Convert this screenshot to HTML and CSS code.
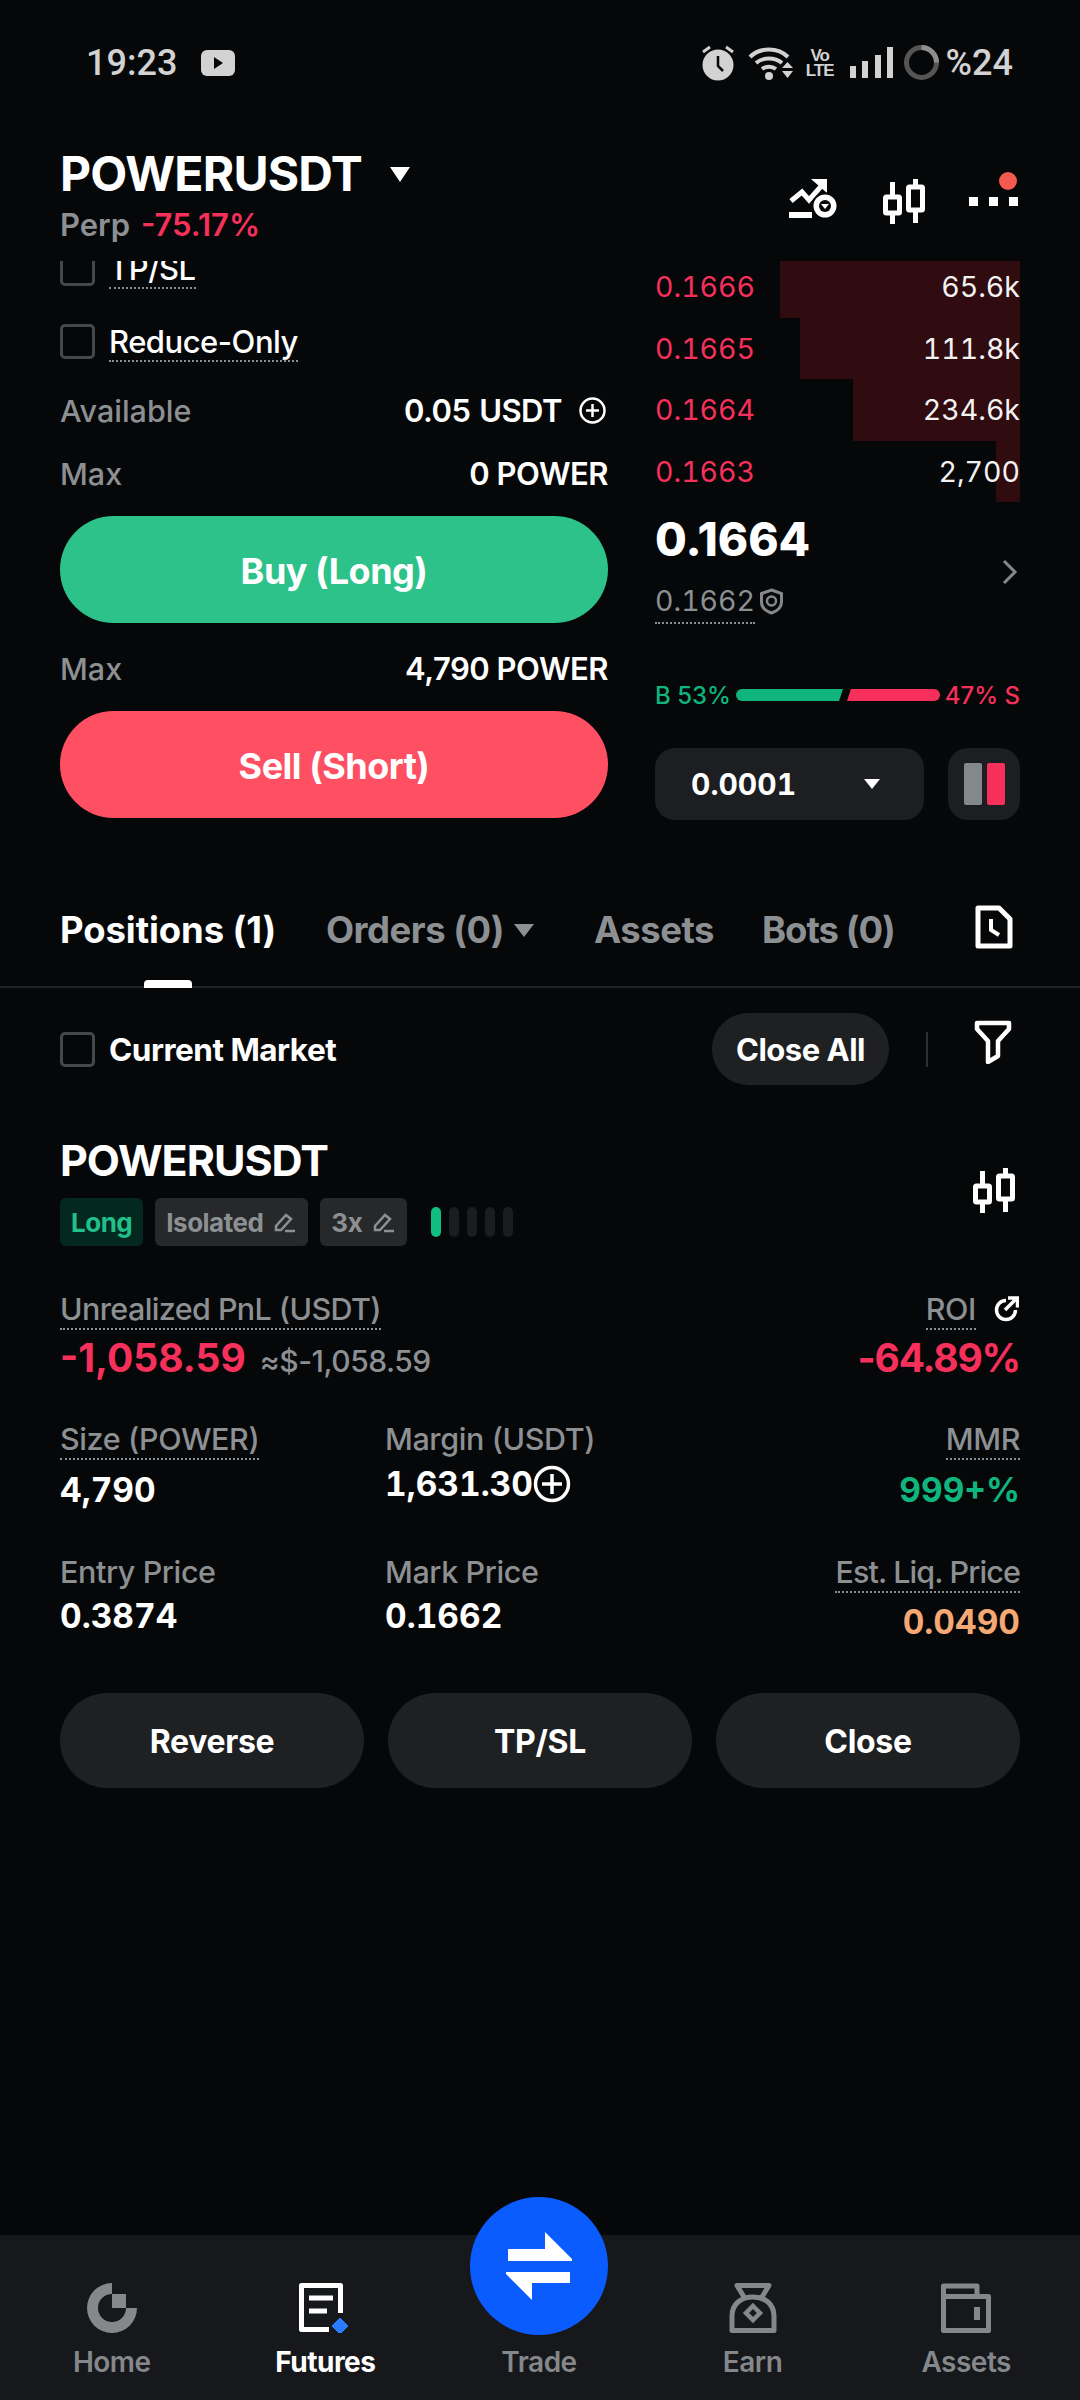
FILE: index.html
```html
<!DOCTYPE html>
<html lang="en">
<head>
    <meta charset="UTF-8">
    <meta name="viewport" content="width=device-width, initial-scale=1.0">
    <link rel="stylesheet" href="styles.css">
    <title>POWERUSDT Futures</title>
</head>
<body>
    <!-- status bar -->
    <div class="status">
        <span class="status-time">19:23</span>
        <svg class="status-yt" width="34" height="26" viewBox="0 0 34 26"><rect width="34" height="26" rx="6" fill="#d2d2d2"/><path d="M13 7l9 6-9 6z" fill="#060708"/></svg>
        <div class="status-right">
            <svg class="status-alarm" width="32" height="36" viewBox="0 0 32 36"><circle cx="16" cy="20" r="15.500" fill="#d2d2d2"/><path d="M16 11v10l5 5" fill="none" stroke="#060708" stroke-width="2.500"/><path d="M1 7l7-5M31 7l-7-5" stroke="#d2d2d2" stroke-width="3"/></svg>
            <svg class="status-wifi" width="46" height="34" viewBox="0 0 46 34"><path d="M2 11C12 1 30 1 40 11M8 17c7-6 19-6 26 0M14 23c4-3 10-3 14 0" fill="none" stroke="#d2d2d2" stroke-width="4"/><circle cx="21" cy="30" r="4" fill="#d2d2d2"/><path d="M34 22h11l-5.500-6zM34 25h11l-5.500 7z" fill="#d2d2d2"/></svg>
            <div class="volte"><span>Vo</span><span>LTE</span></div>
            <svg width="43" height="31" viewBox="0 0 43 31"><path d="M0 19h6v12H0zM12 14h6v17h-6zM25 8h6v23h-6zM37 0h6v31h-6z" fill="#d2d2d2"/></svg>
            <svg class="status-ring" width="35" height="35" viewBox="0 0 35 35"><circle cx="17.500" cy="17.500" r="15" fill="none" stroke="#555" stroke-width="5"/><path d="M17.500 2.500a15 15 0 0 1 15 15" fill="none" stroke="#8e8e8e" stroke-width="5"/></svg>
            <span class="status-batt">%24</span>
        </div>
    </div>

    <!-- pair header -->
    <div class="header">
        <div>
            <div class="pair">POWERUSDT <span class="pair-arrow"></span></div>
            <div class="pair-sub"><span class="muted">Perp</span> <span class="red">-75.17%</span></div>
        </div>
        <div class="header-icons">
            <svg width="48" height="40" viewBox="0 0 48 40"><path d="M0 33h23v6H0z" fill="#fff"/><path d="M2 22l11-9 7 8 15-17" fill="none" stroke="#fff" stroke-width="5"/><path d="M22 0h16v14z" fill="#fff"/><circle cx="36" cy="27" r="12.500" fill="#fff" stroke="#060708" stroke-width="2"/><circle cx="36" cy="27" r="6" fill="#060708"/><path d="M32 25h8l-4 5z" fill="#fff"/></svg>
            <svg class="candle" width="42" height="45" viewBox="0 0 42 45"><use href="#candle-mark"/></svg>
            <div class="more">
                <i></i><i></i><i></i>
                <b class="more-dot"></b>
            </div>
        </div>
    </div>

    <svg width="0" height="0" class="defs">
        <defs>
            <g id="candle-mark" fill="none" stroke="#fff" stroke-width="5">
                <rect x="2.500" y="18" width="14" height="16" rx="1"/>
                <path d="M9.500 3v15M9.500 34v11"/>
                <rect x="25.500" y="8" width="14" height="23" rx="1"/>
                <path d="M32.500 0v8M32.500 31v13"/>
            </g>
            <g id="pen-mark" fill="none" stroke="#8d9093" stroke-width="2.500">
                <path d="M3 15L13 4l5 4-10 11H3zM12 20h10"/>
            </g>
        </defs>
    </svg>

    <!-- order form and book -->
    <div class="trade">
        <div class="form">
            <div class="check-row">
                <span class="box"></span><span class="check-label">TP/SL</span>
            </div>
            <div class="check-row">
                <span class="box"></span><span class="check-label">Reduce-Only</span>
            </div>
            <div class="form-row form-row-first">
                <span class="muted">Available</span>
                <span class="form-val form-val-avail">0.05&nbsp; USDT
                    <svg class="plus-small" width="27" height="27" viewBox="0 0 27 27"><circle cx="13.500" cy="13.500" r="12" fill="none" stroke="#fff" stroke-width="2.500"/><path d="M13.500 7v13M7 13.500h13" stroke="#fff" stroke-width="2.500"/></svg>
                </span>
            </div>
            <div class="form-row">
                <span class="muted">Max</span>
                <span class="form-val">0 POWER</span>
            </div>
            <button class="big-btn buy">Buy (Long)</button>
            <div class="form-row form-row-max">
                <span class="muted">Max</span>
                <span class="form-val">4,790 POWER</span>
            </div>
            <button class="big-btn sell">Sell (Short)</button>
        </div>

        <div class="book">
            <div class="book-row"><b class="depth" style="width:240px"></b><span class="red">0.1666</span><span class="qty">65.6k</span></div>
            <div class="book-row"><b class="depth" style="width:220px"></b><span class="red">0.1665</span><span class="qty">111.8k</span></div>
            <div class="book-row"><b class="depth" style="width:167px"></b><span class="red">0.1664</span><span class="qty">234.6k</span></div>
            <div class="book-row"><b class="depth" style="width:24px"></b><span class="red">0.1663</span><span class="qty">2,700</span></div>
            <div class="last">
                <div>
                    <div class="last-price">0.1664</div>
                    <div class="mark"><span class="mark-num">0.1662</span>
                        <svg width="25" height="27" viewBox="0 0 25 27"><path d="M12.500 2l10 3.500V14c0 5-4 9-10 11C6.500 23 2.500 19 2.500 14V5.500z" fill="none" stroke="#85888b" stroke-width="3"/><circle cx="12.500" cy="13" r="4.500" fill="none" stroke="#85888b" stroke-width="2.500"/></svg>
                    </div>
                </div>
                <svg class="chev" width="16" height="26" viewBox="0 0 16 26"><path d="M2 2l11 11L2 24" fill="none" stroke="#85888b" stroke-width="3"/></svg>
            </div>
            <div class="ratio">
                <span class="green">B 53%</span>
                <svg width="204" height="12" viewBox="0 0 204 12"><path d="M6 0h101l-4 12H6a6 6 0 0 1 0-12z" fill="#0fb57d"/><path d="M115 0h83a6 6 0 0 1 0 12h-87z" fill="#f6305b"/></svg>
                <span class="red">47% S</span>
            </div>
            <div class="book-ctrl">
                <div class="tick"><span>0.0001</span><i class="tick-arrow"></i></div>
                <div class="layout-btn"><i class="half-grey"></i><i class="half-red"></i></div>
            </div>
        </div>
    </div>

    <!-- tabs -->
    <div class="tabs">
        <span class="tab tab-on">Positions (1)</span>
        <span class="tab tab-orders">Orders (0) <i class="tab-arrow"></i></span>
        <span class="tab tab-assets">Assets</span>
        <span class="tab tab-bots">Bots (0)</span>
        <svg class="tab-doc" width="38" height="44" viewBox="0 0 38 44"><path d="M3 3h21l11 11v27H3z" fill="none" stroke="#fff" stroke-width="5" stroke-linejoin="round"/><path d="M16 14v11l8 5" fill="none" stroke="#fff" stroke-width="4"/></svg>
    </div>

    <!-- position list -->
    <div class="toolbar">
        <span class="box"></span>
        <span class="toolbar-label">Current Market</span>
        <span class="close-all">Close All</span>
        <i class="toolbar-sep"></i>
        <svg width="38" height="44" viewBox="0 0 38 44"><path d="M3 3h32v6L24 21v15l-10 6V21L3 9z" fill="none" stroke="#fff" stroke-width="4.500" stroke-linejoin="round"/></svg>
    </div>

    <div class="position">
        <div class="pos-head">
            <div>
                <div class="pos-name">POWERUSDT</div>
                <div class="tags">
                    <span class="tag tag-long">Long</span>
                    <span class="tag">Isolated <svg width="24" height="22" viewBox="0 0 24 22"><use href="#pen-mark"/></svg></span>
                    <span class="tag">3x <svg width="24" height="22" viewBox="0 0 24 22"><use href="#pen-mark"/></svg></span>
                    <div class="lev"><i class="lev-on"></i><i></i><i></i><i></i><i></i></div>
                </div>
            </div>
            <svg class="pos-candle" width="42" height="45" viewBox="0 0 42 45"><use href="#candle-mark"/></svg>
        </div>

        <div class="pnl">
            <div>
                <span class="lbl dotted lbl-pnl">Unrealized PnL (USDT)</span>
                <div class="pnl-val"><span class="red pnl-num">-1,058.59</span><span class="pnl-usd">≈$-1,058.59</span></div>
            </div>
            <div class="right">
                <div class="roi-top"><span class="lbl dotted">ROI</span>
                    <svg width="26" height="26" viewBox="0 0 26 26"><path d="M13 4.500a9.500 9.500 0 1 0 9.500 9.500" fill="none" stroke="#fff" stroke-width="3.500"/><path d="M12 14L23 3M15 2h9.500v9.500" fill="none" stroke="#fff" stroke-width="3.500"/></svg>
                </div>
                <div class="red pnl-num pnl-roi">-64.89%</div>
            </div>
        </div>

        <div class="stats">
            <div class="stat"><span class="lbl dotted">Size (POWER)</span><div class="val">4,790</div></div>
            <div class="stat"><span class="lbl">Margin (USDT)</span><div class="val val-margin">1,631.30<svg width="38" height="38" viewBox="0 0 38 38"><circle cx="19" cy="19" r="16.500" fill="none" stroke="#fff" stroke-width="3.500"/><path d="M19 9v20M9 19h20" stroke="#fff" stroke-width="3.500"/></svg></div></div>
            <div class="stat right"><span class="lbl dotted">MMR</span><div class="val green">999+%</div></div>
            <div class="stat stat-low"><span class="lbl">Entry Price</span><div class="val">0.3874</div></div>
            <div class="stat stat-low"><span class="lbl">Mark Price</span><div class="val">0.1662</div></div>
            <div class="stat stat-low right"><span class="lbl dotted lbl-liq">Est. Liq. Price</span><div class="val orange">0.0490</div></div>
        </div>

        <div class="actions">
            <button class="act">Reverse</button>
            <button class="act">TP/SL</button>
            <button class="act">Close</button>
        </div>
    </div>

    <!-- bottom nav -->
    <div class="nav">
        <div class="nav-item">
            <svg width="50" height="50" viewBox="0 0 50 50"><path d="M25 0A25 25 0 1 0 50 25H39A14 14 0 1 1 25 11Z" fill="#85888b"/><rect x="25" y="11" width="14" height="14" fill="#85888b"/></svg>
            <span>Home</span>
        </div>
        <div class="nav-item nav-on">
            <svg width="52" height="50" viewBox="0 0 52 50"><path d="M41.500 30V2.500H2.500V46.500H30" fill="none" stroke="#fff" stroke-width="5" stroke-linejoin="round"/><path d="M10 15h24M10 28h18" stroke="#fff" stroke-width="5"/><path d="M41 35l8 8-8 8-8-8z" fill="#2a7bff" stroke="#2a7bff" stroke-linejoin="round"/></svg>
            <span>Futures</span>
        </div>
        <div class="nav-item">
            <div class="nav-gap"></div>
            <span>Trade</span>
        </div>
        <div class="nav-item">
            <svg width="48" height="50" viewBox="0 0 48 50"><path d="M15 14L8 2.500H40L33 14M3 47.500V33C3 21 12 14 24 14s21 7 21 19v14.500z" fill="none" stroke="#85888b" stroke-width="5" stroke-linejoin="round"/><path d="M24 23l7 7-7 7-7-7z" fill="none" stroke="#85888b" stroke-width="4.500"/></svg>
            <span>Earn</span>
        </div>
        <div class="nav-item">
            <svg width="50" height="50" viewBox="0 0 50 50"><path d="M2.500 47.500V3H36V13.500H47.500V47.500zM2.500 13.500H36" fill="none" stroke="#85888b" stroke-width="5" stroke-linejoin="round"/><rect x="33" y="24" width="6" height="13" fill="#85888b"/></svg>
            <span>Assets</span>
        </div>
        <div class="trade-btn">
            <svg width="70" height="70" viewBox="-35 -35 70 70"><path d="M6-34L33-7V-5H-31V-17H6zM31 6V17H-7V34L-33 8V6z" fill="#fff"/></svg>
        </div>
    </div>
</body>
</html>
```

FILE: styles.css
```css
body{
    margin: 0;
    width: 1080px;
    height: 2400px;
    overflow: hidden;
    background-color: #060708;
    color: #fff;
    font-family: Inter, "Liberation Sans", sans-serif;
    display: flex;
    flex-direction: column;
}
button{
    font-family: inherit;
    border: none;
    color: #fff;
    padding: 0;
}
.defs{
    position: absolute;
}
.red{
    color: #f6305b;
}
.green{
    color: #0fb57d;
}
.orange{
    color: #f4a874;
}
.muted{
    color: #8d9093;
}
.right{
    text-align: right;
}

/* status bar */
.status{
    height: 125px;
    flex: none;
    display: flex;
    align-items: center;
    padding: 0 67px 0 86px;
    color: #d2d2d2;
}
.status-time{
    font-family: Roboto, sans-serif;
    font-size: 36px;
    font-weight: 500;
}
.status-yt{
    margin-left: 24px;
}
.status-right{
    margin-left: auto;
    display: flex;
    align-items: center;
    gap: 16px;
}
.status-alarm{
    margin-right: -2px;
}
.status-wifi{
    margin-right: -4px;
}
.status-ring{
    margin-left: -5px;
}
.volte{
    display: flex;
    flex-direction: column;
    font-family: "Liberation Sans", sans-serif;
    font-size: 17px;
    font-weight: 700;
    line-height: 15px;
    letter-spacing: -1px;
    text-align: center;
}
.status-batt{
    font-family: Roboto, sans-serif;
    font-size: 36px;
    font-weight: 500;
    margin-left: -9px;
}

/* header */
.header{
    height: 136px;
    flex: none;
    display: flex;
    justify-content: space-between;
    padding: 0 60px;
}
.pair{
    margin-top: 24px;
    font-size: 48px;
    font-weight: 700;
    line-height: 50px;
    letter-spacing: -0.8px;
    display: flex;
    align-items: center;
}
.pair-arrow{
    margin-left: 28px;
    border-left: 10px solid transparent;
    border-right: 10px solid transparent;
    border-top: 15px solid #fff;
}
.pair-sub{
    margin-top: 6px;
    font-size: 31px;
    line-height: 40px;
    font-weight: 600;
    word-spacing: 3px;
}
.header-icons{
    display: flex;
    align-items: flex-start;
    padding-top: 54px;
    margin-right: 2px;
}
.candle{
    margin-left: 46px;
    margin-top: 0;
}
.more{
    position: relative;
    width: 49px;
    margin-left: 44px;
    margin-top: 18px;
    display: flex;
    justify-content: space-between;
}
.more i{
    width: 9px;
    height: 9px;
    background-color: #fff;
}
.more-dot{
    position: absolute;
    right: 1px;
    top: -25px;
    width: 18px;
    height: 18px;
    border-radius: 50%;
    background-color: #f55a4e;
}

/* order form and book */
.trade{
    height: 559px;
    flex: none;
    overflow: hidden;
    display: flex;
    padding: 0 60px;
    gap: 47px;
}
.form{
    width: 548px;
    margin-top: -10px;
    flex: none;
}
.check-row{
    display: flex;
    align-items: flex-start;
    height: 35px;
    margin-bottom: 38px;
}
.box{
    display: block;
    width: 35px;
    height: 35px;
    flex: none;
    box-sizing: border-box;
    border: 3px solid #45484b;
    border-radius: 5px;
}
.check-label{
    margin-left: 14px;
    font-size: 31px;
    font-weight: 500;
    line-height: 36px;
    letter-spacing: -0.5px;
    border-bottom: 2px dotted #8d9093;
}
.form-row{
    display: flex;
    justify-content: space-between;
    align-items: center;
    height: 40px;
    font-size: 31px;
    font-weight: 500;
    margin-bottom: 23px;
}
.form-row .muted{
    font-size: 30.500px;
}
.form-row-first{
    margin-top: -7px;
}
.form-row-max{
    margin-top: 25px;
}
.form-val{
    display: flex;
    align-items: center;
    font-weight: 600;
    letter-spacing: -0.5px;
}
.form-val-avail{
    word-spacing: -3px;
}
.plus-small{
    margin-left: 17px;
    margin-right: 2px;
}
.big-btn{
    display: block;
    width: 548px;
    height: 107px;
    border-radius: 54px;
    padding-top: 2px;
    font-size: 36px;
    font-weight: 700;
    letter-spacing: -0.5px;
}
.buy{
    margin-top: 1px;
    background-color: #2ec28b;
}
.sell{
    margin-top: 1px;
    background-color: #ff4f62;
}
.book{
    width: 365px;
    margin-top: -5px;
    flex: none;
}
.book-row{
    position: relative;
    display: flex;
    justify-content: space-between;
    align-items: center;
    height: 61.5px;
    font-size: 28.500px;
    font-variant-numeric: tabular-nums;
}
.depth{
    position: absolute;
    right: 0;
    top: 0;
    bottom: 0;
    background-color: #300b10;
}
.book-row span{
    position: relative;
}
.qty{
    color: #f2f2f2;
}
.last{
    display: flex;
    justify-content: space-between;
    height: 141px;
    box-sizing: border-box;
    padding-top: 9px;
}
.last-price{
    font-size: 46px;
    font-weight: 800;
    line-height: 56px;
}
.mark{
    display: flex;
    align-items: flex-start;
    margin-top: 15px;
    color: #8d9093;
    font-size: 28.500px;
    line-height: 38px;
    font-variant-numeric: tabular-nums;
}
.mark-num{
    border-bottom: 2px dotted #8d9093;
    padding-bottom: 2px;
    margin-right: 4px;
}
.mark svg{
    margin-top: 6px;
}
.chev{
    margin-right: 2px;
    margin-top: 48px;
}
.ratio{
    display: flex;
    justify-content: space-between;
    align-items: center;
    margin-top: 38px;
    height: 28px;
    font-size: 24px;
    font-weight: 500;
}
.book-ctrl{
    display: flex;
    justify-content: space-between;
    margin-top: 39px;
}
.tick{
    width: 269px;
    height: 72px;
    border-radius: 20px;
    background-color: #1c1e21;
    display: flex;
    align-items: center;
    justify-content: space-between;
    padding: 0 44px 0 36px;
    box-sizing: border-box;
    font-size: 30px;
    font-weight: 700;
    font-variant-numeric: tabular-nums;
}
.tick-arrow{
    border-left: 8px solid transparent;
    border-right: 8px solid transparent;
    border-top: 10px solid #fff;
}
.layout-btn{
    width: 72px;
    height: 72px;
    border-radius: 20px;
    background-color: #1c1e21;
    display: flex;
    justify-content: center;
    align-items: center;
    gap: 5px;
}
.layout-btn i{
    width: 18px;
    height: 42px;
    border-radius: 2px;
}
.half-grey{
    background-color: #85888b;
}
.half-red{
    background-color: #f6305b;
}

/* tabs */
.tabs{
    height: 168px;
    flex: none;
    box-sizing: border-box;
    border-bottom: 2px solid #202224;
    padding: 86px 67px 0 60px;
    display: flex;
    align-items: flex-start;
    font-size: 36.500px;
    font-weight: 700;
    line-height: 48px;
    letter-spacing: -0.5px;
}
.tab{
    color: #8d9093;
    white-space: nowrap;
}
.tab-on{
    position: relative;
    color: #fff;
    width: 215px;
    letter-spacing: -0.1px;
}
.tab-on::after{
    content: "";
    position: absolute;
    left: 84px;
    top: 74px;
    width: 48px;
    height: 8px;
    border-radius: 4px 4px 0 0;
    background-color: #fff;
}
.tab-orders{
    margin-left: 51px;
    display: flex;
    align-items: center;
}
.tab-arrow{
    margin-left: 10px;
    border-left: 10px solid transparent;
    border-right: 10px solid transparent;
    border-top: 13px solid #8d9093;
}
.tab-assets{
    margin-left: 60px;
}
.tab-bots{
    margin-left: 48px;
    letter-spacing: -1px;
}
.tab-doc{
    margin-left: auto;
    margin-top: -1px;
}

/* toolbar above the position */
.toolbar{
    display: flex;
    align-items: center;
    padding: 25px 68px 0 60px;
    height: 72px;
    flex: none;
}
.toolbar-label{
    margin-left: 14px;
    font-size: 31.500px;
    font-weight: 700;
    letter-spacing: -0.5px;
}
.close-all{
    margin-left: auto;
    width: 177px;
    height: 72px;
    border-radius: 36px;
    background-color: #1e2022;
    font-size: 31px;
    font-weight: 700;
    letter-spacing: -0.5px;
    display: flex;
    align-items: center;
    justify-content: center;
}
.toolbar-sep{
    width: 2px;
    height: 35px;
    margin: 0 46px 0 37px;
    background-color: #2c2e30;
}
.toolbar svg{
    margin-top: -15px;
}

/* position card */
.position{
    padding: 0 60px;
    flex: 1;
}
.pos-head{
    display: flex;
    justify-content: space-between;
    margin-top: 50px;
}
.pos-name{
    font-size: 43px;
    font-weight: 700;
    line-height: 50px;
    letter-spacing: -1px;
}
.tags{
    display: flex;
    align-items: center;
    margin-top: 13px;
}
.tag{
    display: flex;
    align-items: center;
    gap: 10px;
    height: 48px;
    padding: 0 11px;
    margin-right: 12px;
    border-radius: 6px;
    background-color: #26282a;
    color: #8d9093;
    font-size: 26px;
    font-weight: 700;
    letter-spacing: -0.5px;
}
.tag-long{
    background-color: #03281f;
    color: #1fc089;
}
.lev{
    display: flex;
    gap: 8px;
    margin-left: 12px;
}
.lev i{
    width: 10px;
    height: 30px;
    border-radius: 5px;
    background-color: #1a1c1e;
}
.lev .lev-on{
    background-color: #0fbf7f;
}
.pos-candle{
    margin-top: 33px;
    margin-right: 5px;
}
.lbl{
    display: inline-block;
    color: #8d9093;
    font-size: 30.500px;
    font-weight: 500;
    line-height: 38px;
    letter-spacing: -0.4px;
    border-bottom: 2px solid transparent;
}
.lbl-pnl{
    letter-spacing: -0.6px;
}
.lbl-liq{
    letter-spacing: -0.9px;
}
.dotted{
    border-bottom: 2px dotted #8d9093;
}
.pnl{
    display: flex;
    justify-content: space-between;
    margin-top: 44px;
}
.pnl-val{
    display: flex;
    align-items: baseline;
    margin-top: 3px;
}
.pnl-num{
    font-size: 39px;
    font-weight: 700;
    line-height: 50px;
}
.pnl-roi{
    letter-spacing: -1.2px;
}
.pnl-usd{
    margin-left: 14px;
    color: #8d9093;
    font-size: 30px;
    font-weight: 500;
    letter-spacing: -0.5px;
}
.roi-top{
    display: flex;
    justify-content: flex-end;
    align-items: flex-start;
    margin-bottom: 3px;
}
.roi-top svg{
    margin-left: 17px;
    margin-top: 6px;
    margin-right: 1px;
}
.stats{
    display: grid;
    grid-template-columns: 325px 1fr auto;
    margin-top: 37px;
}
.stat-low{
    margin-top: 42px;
}
.val{
    font-size: 33.500px;
    font-weight: 700;
    line-height: 42px;
    margin-top: 9px;
    font-variant-numeric: tabular-nums;
}
.stat-low .val{
    margin-top: 2px;
}
.val-margin{
    display: flex;
    align-items: center;
    margin-top: 3px;
}
.stat-low.right .val{
    margin-top: 8px;
}
.actions{
    display: flex;
    justify-content: space-between;
    margin-top: 50px;
}
.act{
    width: 304px;
    height: 95px;
    border-radius: 48px;
    padding-top: 2px;
    background-color: #1e2022;
    font-size: 32px;
    font-weight: 700;
    letter-spacing: -0.3px;
}

/* bottom nav */
.nav{
    position: relative;
    height: 165px;
    flex: none;
    display: flex;
    box-sizing: border-box;
    padding: 0 7px 0 5px;
    background-color: #16181b;
}
.nav-item{
    flex: 1;
    display: flex;
    flex-direction: column;
    align-items: center;
    padding-top: 48px;
    color: #85888b;
    font-size: 28px;
    font-weight: 600;
    line-height: 36px;
    letter-spacing: -0.5px;
}
.nav-item span{
    margin-top: 11px;
}
.nav-gap{
    height: 50px;
}
.nav-on{
    color: #fff;
    font-weight: 700;
}
.trade-btn{
    position: absolute;
    left: 470px;
    top: -38px;
    width: 138px;
    height: 138px;
    border-radius: 50%;
    background-color: #0a5cff;
    display: flex;
    align-items: center;
    justify-content: center;
}
```
